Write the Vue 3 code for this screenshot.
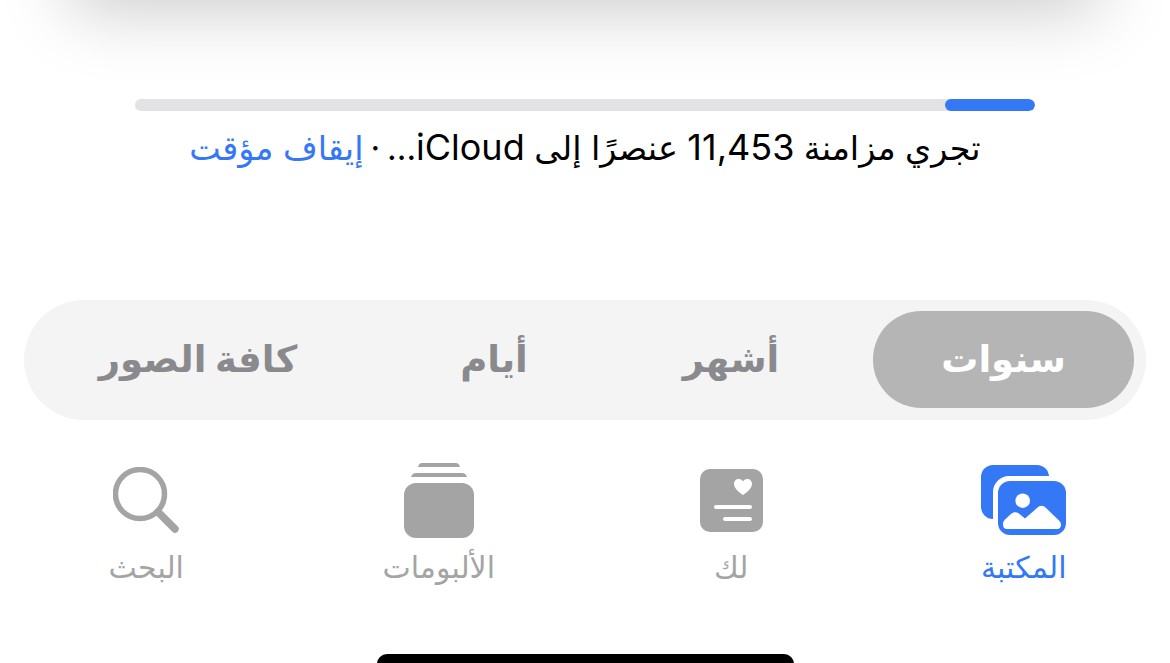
<script setup>
const segments = [
  { label: 'سنوات', active: true },
  { label: 'أشهر' },
  { label: 'أيام' },
  { label: 'كافة الصور' }
];

const tabs = [
  { label: 'المكتبة', icon: 'library', active: true },
  { label: 'لك', icon: 'foryou' },
  { label: 'الألبومات', icon: 'albums' },
  { label: 'البحث', icon: 'search' }
];
</script>

<template>
  <div class="screen" dir="rtl">
    <div class="shade"></div>

    <div class="sync">
      <div class="sync__track">
        <div class="sync__fill"></div>
      </div>
      <p class="sync__text">
        <span>تجري مزامنة <span class="sync__latin">11,453</span> عنصرًا إلى <span class="sync__latin">iCloud</span>...</span>
        <span class="sync__sep">·</span>
        <span class="sync__pause">إيقاف مؤقت</span>
      </p>
    </div>

    <div class="segments">
      <div
        v-for="item in segments"
        :key="item.label"
        class="segment"
        :class="{ 'segment--active': item.active }"
      >
        <span class="segment__text">{{ item.label }}</span>
      </div>
    </div>

    <nav class="tabs">
      <div
        v-for="tab in tabs"
        :key="tab.label"
        class="tab"
        :class="{ 'tab--active': tab.active }"
      >
        <div class="tab__icon">
          <svg v-if="tab.icon === 'library'" width="86" height="71" viewBox="0 0 86 71">
            <rect x="0" y="0" width="68" height="54" rx="12" fill="currentColor" />
            <rect x="12" y="11" width="78" height="64" rx="16" fill="#fff" />
            <rect x="17" y="16" width="68" height="54" rx="12" fill="currentColor" />
            <circle cx="41.700" cy="35.700" r="7.300" fill="#fff" />
            <path d="M26 64H76C79 64 80 62 80 59.500C80 58 79 56.500 78 55.500L65 43C62 40 59 40 56 43L44 53.500L38.500 49C36 46.500 32.500 46.500 30 49L24 54.500C22.500 56 22 57.500 22 59.500C22 62.500 23.500 64 26 64Z" fill="#fff" />
          </svg>
          <svg v-else-if="tab.icon === 'foryou'" width="63" height="63" viewBox="0 0 63 63">
            <rect width="63" height="63" rx="10" fill="currentColor" />
            <path d="M43 26C41.500 25 34 20 34 15C34 12 36 10 38.800 10C40.800 10 42.300 11 43 12.600C43.700 11 45.200 10 47.200 10C50 10 52 12 52 15C52 20 44.500 25 43 26Z" fill="#fff" />
            <rect x="14" y="36" width="38" height="4" rx="2" fill="#fff" />
            <rect x="23" y="48" width="29" height="4" rx="2" fill="#fff" />
          </svg>
          <svg v-else-if="tab.icon === 'albums'" width="70" height="75" viewBox="0 0 70 75">
            <path d="M14 4C14.800 1.500 16 0 18 0H52C54 0 55.200 1.500 56 4Z" fill="currentColor" />
            <path d="M7 14C7.800 11.500 9.500 10 12 10H58C60.500 10 62.200 11.500 63 14Z" fill="currentColor" />
            <rect x="0" y="20" width="70" height="55" rx="12" fill="currentColor" />
          </svg>
          <svg v-else width="67" height="67" viewBox="0 0 67 67">
            <circle cx="27" cy="27" r="24.500" fill="none" stroke="currentColor" stroke-width="5.500" />
            <path d="M45 45L62 62" fill="none" stroke="currentColor" stroke-width="7.500" stroke-linecap="round" />
          </svg>
        </div>
        <span class="tab__label">{{ tab.label }}</span>
      </div>
    </nav>

    <div class="home-bar"></div>
  </div>
</template>

<style scoped>
.screen {
  position: relative;
  width: 1170px;
  height: 663px;
  overflow: hidden;
  background: #fff;
  color: #000;
  font-family: "Inter", "DejaVu Sans", sans-serif;
  display: flex;
  flex-direction: column;
  align-items: center;
}

.shade {
  position: absolute;
  top: -100px;
  left: 80px;
  right: 80px;
  height: 100px;
  background: #cbcbcb;
  box-shadow: 0 0 70px 10px #cbcbcb;
}

.sync {
  position: relative;
  width: 900px;
  margin-top: 99px;
}

.sync__track {
  height: 12px;
  border-radius: 6px;
  background: #e3e3e5;
  overflow: hidden;
}

.sync__fill {
  width: 90px;
  height: 100%;
  border-radius: 6px;
  background: #3478f6;
}

.sync__text {
  margin: 13px 0 0;
  text-align: center;
  font-size: 33.5px;
  line-height: 46px;
  white-space: nowrap;
}

.sync__latin {
  font-size: 36px;
}

.sync__sep {
  margin: 0 7px;
}

.sync__pause {
  color: #3478f6;
}

.segments {
  width: 1122px;
  height: 120px;
  margin-top: 129px;
  padding: 11px 12px 12px 3px;
  box-sizing: border-box;
  border-radius: 60px;
  background: #f4f4f4;
  display: grid;
  grid-template-columns: 261px 224px 190px 342px;
  column-gap: 30px;
}

.segment {
  display: flex;
  align-items: center;
  justify-content: center;
  border-radius: 48px;
  font-size: 37px;
  font-weight: 700;
  color: #8a8a8e;
}

.segment__text {
  margin-bottom: 3px;
}

.segment--active {
  background: #b5b5b5;
  color: #fff;
}

.tabs {
  width: 100%;
  margin-top: 42px;
  display: grid;
  grid-template-columns: repeat(4, 1fr);
}

.tab {
  display: flex;
  flex-direction: column;
  align-items: center;
  color: #a4a4a4;
}

.tab--active {
  color: #3478f6;
}

.tab__icon {
  height: 76px;
  display: flex;
  align-items: center;
  justify-content: center;
}

.tab__label {
  margin-top: 9px;
  font-size: 30px;
  line-height: 40px;
}

.home-bar {
  position: absolute;
  left: 377px;
  top: 654px;
  width: 417px;
  height: 20px;
  border-radius: 10px;
  background: #000;
}
</style>
